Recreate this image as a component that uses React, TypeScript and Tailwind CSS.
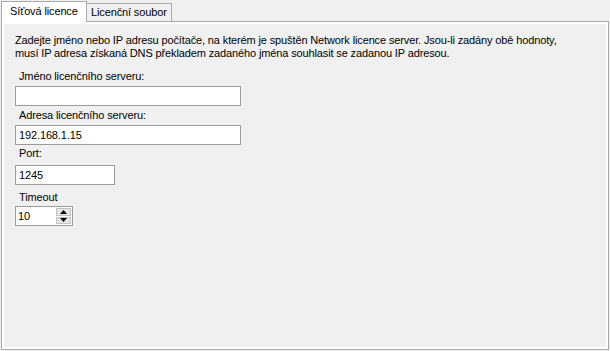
import React from 'react';

const FONT = { fontFamily: '"Liberation Sans", Arial, sans-serif' };

function Field({
  label,
  value,
  width,
  top,
  gap,
}: {
  label: string;
  value: string;
  width: string;
  top: string;
  gap: string;
}) {
  return (
    <div className={top}>
      <div className="h-[13px] pl-[4px] leading-[13px]">{label}</div>
      <div className={`${width} ${gap} h-[20px] border border-[#9c9c9c] bg-white pl-[3px] leading-[18px]`}>
        {value}
      </div>
    </div>
  );
}

function Spinner() {
  return (
    <div className="mt-[2px] flex h-[20px] w-[58px] border border-[#9c9c9c] bg-white">
      <div className="flex-1 pl-[2px] leading-[18px]">10</div>
      <div className="flex w-[16px] flex-col gap-px py-px pr-px">
        <div className="flex flex-1 items-center justify-center border border-[#c4c4c4] bg-[#e6e6e6]">
          <svg width="7" height="4" viewBox="0 0 7 4">
            <path d="M3.5 0 L7 4 L0 4 Z" fill="#000" />
          </svg>
        </div>
        <div className="flex flex-1 items-center justify-center border border-[#c4c4c4] bg-[#e6e6e6]">
          <svg width="7" height="4" viewBox="0 0 7 4">
            <path d="M0 0 L7 0 L3.5 4 Z" fill="#000" />
          </svg>
        </div>
      </div>
    </div>
  );
}

export default function App() {
  return (
    <div
      className="h-[351px] w-[610px] overflow-hidden bg-[#f0f0f0] text-[11px] tracking-[-0.13px] text-black"
      style={FONT}
    >
      <div className="flex items-end pl-px pt-px">
        <div className="relative z-10 -mb-px h-[21px] w-[86px] border border-b-0 border-[#a9a9a9] bg-white pl-[8px] pt-[3px] leading-[13px]">
          Síťová licence
        </div>
        <div className="h-[18px] w-[85px] border border-b-0 border-l-0 border-[#a9a9a9] bg-[#f0f0f0] pl-[4px] pt-[2px] leading-[13px]">
          Licenční soubor
        </div>
      </div>
      <div className="ml-px h-[329px] w-[608px] border border-[#a9a9a9] bg-white p-[2px]">
        <div className="h-full w-full bg-[#f0f0f0] pl-[11px] pt-[10px]">
          <p className="leading-[13px]">
            Zadejte jméno nebo IP adresu počítače, na kterém je spuštěn Network licence server. Jsou-li zadány obě hodnoty,
            <br />
            musí IP adresa získaná DNS překladem zadaného jména souhlasit se zadanou IP adresou.
          </p>
          <Field top="mt-[10px]" gap="mt-[3px]" label="Jméno licenčního serveru:" value="" width="w-[226px]" />
          <Field top="mt-[3px]" gap="mt-[3px]" label="Adresa licenčního serveru:" value="192.168.1.15" width="w-[226px]" />
          <Field top="mt-[2px]" gap="mt-[5px]" label="Port:" value="1245" width="w-[100px]" />
          <div className="mt-[6px]">
            <div className="h-[13px] pl-[4px] leading-[13px]">Timeout</div>
            <Spinner />
          </div>
        </div>
      </div>
    </div>
  );
}
